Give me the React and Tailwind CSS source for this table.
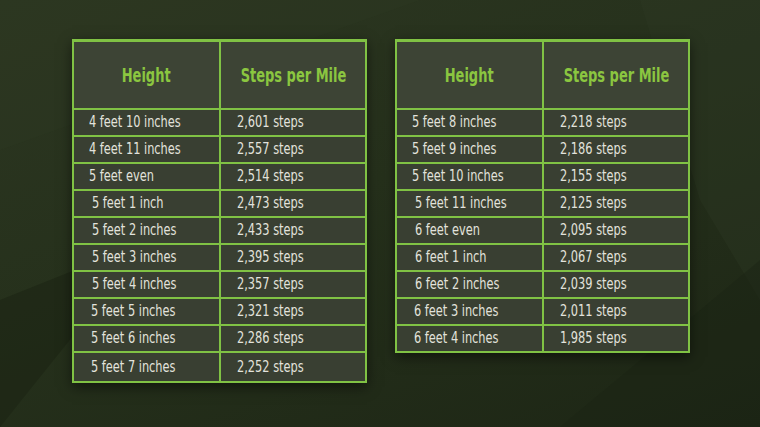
import React from 'react';

const left = [
  ['4 feet 10 inches', '2,601 steps', 0],
  ['4 feet 11 inches', '2,557 steps', 0],
  ['5 feet even', '2,514 steps', 0],
  ['5 feet 1 inch', '2,473 steps', 2],
  ['5 feet 2 inches', '2,433 steps', 2],
  ['5 feet 3 inches', '2,395 steps', 2],
  ['5 feet 4 inches', '2,357 steps', 2],
  ['5 feet 5 inches', '2,321 steps', 1],
  ['5 feet 6 inches', '2,286 steps', 1],
  ['5 feet 7 inches', '2,252 steps', 1],
];

const right = [
  ['5 feet 8 inches', '2,218 steps', 0],
  ['5 feet 9 inches', '2,186 steps', 0],
  ['5 feet 10 inches', '2,155 steps', 0],
  ['5 feet 11 inches', '2,125 steps', 2],
  ['6 feet even', '2,095 steps', 2],
  ['6 feet 1 inch', '2,067 steps', 2],
  ['6 feet 2 inches', '2,039 steps', 2],
  ['6 feet 3 inches', '2,011 steps', 1],
  ['6 feet 4 inches', '1,985 steps', 1],
];

const StepsTable = ({ rows, tallLast }) => (
  <table className="relative w-[293px] border-collapse table-fixed shadow-[0_4px_12px_rgba(0,0,0,0.5)]">
    <colgroup>
      <col className="w-[147px]" />
      <col className="w-[146px]" />
    </colgroup>
    <thead>
      <tr className="h-[68px] bg-[#3d4435]">
        <th className="border-2 border-t-[3px] border-[#80c244] text-center">
          <span className="inline-block scale-x-[0.76] text-[19px] font-bold text-[#8bc640]">Height</span>
        </th>
        <th className="border-2 border-t-[3px] border-[#80c244] text-center whitespace-nowrap">
          <span className="inline-block scale-x-[0.76] text-[19px] font-bold text-[#8bc640]">Steps per Mile</span>
        </th>
      </tr>
    </thead>
    <tbody>
      {rows.map(([h, s, off], i) => (
        <tr
          key={i}
          className={`${tallLast && i === rows.length - 1 ? 'h-[30px]' : 'h-[27px]'} bg-[#393f32]`}
        >
          <td className={`border-2 border-[#80c244] whitespace-nowrap ${off === 2 ? 'pl-[18px]' : off === 1 ? 'pl-[17px]' : 'pl-[15px]'}`}>
            <span className="inline-block origin-left scale-x-[0.79] pt-[3px] text-[16px] leading-none text-[#e2e2dc]">{h}</span>
          </td>
          <td className="border-2 border-[#80c244] pl-[16px] whitespace-nowrap">
            <span className="inline-block origin-left scale-x-[0.79] pt-[3px] text-[16px] leading-none text-[#e2e2dc]">{s}</span>
          </td>
        </tr>
      ))}
    </tbody>
  </table>
);

export default function App() {
  return (
    <div
      className="relative w-[760px] h-[427px] overflow-hidden bg-[linear-gradient(160deg,#2c3621_0%,#26311c_45%,#1d2615_100%)] flex items-start justify-center gap-[28px] pt-[39px] pl-[2px]"
      style={{ fontFamily: '"DejaVu Sans Condensed", "DejaVu Sans", sans-serif', fontStretch: 'condensed' }}
    >
      <svg className="absolute inset-0" width="760" height="427" viewBox="0 0 760 427">
        <polygon points="0,0 420,0 0,150" fill="#2f3a23" opacity="0.35" />
        <polygon points="0,300 150,240 0,427" fill="#1a2112" opacity="0.5" />
        <polygon points="640,0 760,0 760,300 700,200" fill="#2f3a24" opacity="0.35" />
        <polygon points="560,427 760,260 760,427" fill="#1b2313" opacity="0.45" />
      </svg>
      <StepsTable rows={left} tallLast />
      <StepsTable rows={right} />
    </div>
  );
}
